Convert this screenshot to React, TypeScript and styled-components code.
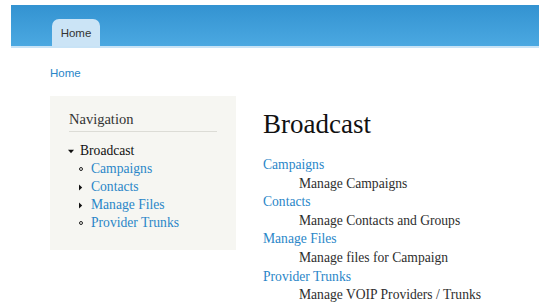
import React from 'react';
import styled, { createGlobalStyle } from 'styled-components';

const Global = createGlobalStyle`
  html, body { margin: 0; padding: 0; background: #fff; }
  body { font-family: "Liberation Serif", Georgia, serif; color: #3b3b3b; }
`;

const Page = styled.div`
  padding: 5px 16px 0 11px;
`;

const Header = styled.header`
  height: 41px;
  background: linear-gradient(to bottom, #3393d1, #4ba8e1);
  border-bottom: 2px solid #c8e3f6;
  display: flex;
  align-items: flex-end;
  padding-left: 41px;
`;

const Tab = styled.a`
  width: 48px;
  height: 20px;
  padding-top: 7px;
  background: #cbe4f6;
  border-radius: 7px 7px 0 0;
  text-align: center;
  font-family: "Liberation Sans", Arial, sans-serif;
  font-size: 11.5px;
  line-height: 14px;
  color: #333;
`;

const Breadcrumb = styled.a`
  display: block;
  margin: 17.5px 0 0 39px;
  font-family: "Liberation Sans", Arial, sans-serif;
  font-size: 11.5px;
  line-height: 14px;
  color: #2a86c8;
`;

const Main = styled.div`
  display: flex;
  align-items: flex-start;
  margin: 16.5px 0 0 39px;
  gap: 27px;
`;

const Sidebar = styled.aside`
  width: 186px;
  height: 154px;
  box-sizing: border-box;
  background: #f6f6f2;
  padding: 15px 19px 0 19px;
`;

const BlockTitle = styled.h2`
  margin: 0;
  font-size: 14.5px;
  line-height: 17px;
  font-weight: normal;
  color: #333;
  padding-bottom: 3px;
  border-bottom: 1px solid #dcdcd6;
`;

const Tree = styled.ul`
  list-style: none;
  margin: 10px 0 0 -1px;
  padding: 0;
`;

const Item = styled.li<{ $indent: number }>`
  display: flex;
  align-items: center;
  height: 18.1px;
  font-size: 13.6px;
  line-height: 18.1px;
  padding-left: ${p => p.$indent}px;
`;

const Marker = styled.span<{ $w: number }>`
  width: ${p => p.$w}px;
  display: inline-flex;
  align-items: center;
  flex-shrink: 0;
`;

const Dot = styled.span`
  width: 2px;
  height: 2px;
  border: 1px solid #222;
  border-radius: 50%;
  margin-left: 1px;
`;

const NavLink = styled.a`
  color: #2a86c8;
`;

const Current = styled.span`
  color: #111;
`;

const Content = styled.section`
  padding-top: 12px;
`;

const Title = styled.h1`
  margin: 0 0 16px 0;
  font-size: 27px;
  font-weight: normal;
  color: #111;
  line-height: 32px;
`;

const Dl = styled.dl`
  margin: 0;
  font-size: 13.6px;
  line-height: 18.6px;
`;

const Dt = styled.dt`
  height: 18.6px;
`;

const Dd = styled.dd`
  margin: 0 0 0 36px;
  height: 18.6px;
  color: #2e2e2e;
`;

const Arrow: React.FC<{ dir: 'down' | 'right' }> = ({ dir }) => (
  <svg width="7" height="7" viewBox="0 0 7 7">
    {dir === 'down'
      ? <path d="M0 1.8 H6 L3 5.2 Z" fill="#111" />
      : <path d="M1 0.5 V6.5 L4.2 3.5 Z" fill="#111" />}
  </svg>
);

const items = [
  { label: 'Campaigns', kind: 'dot', desc: 'Manage Campaigns' },
  { label: 'Contacts', kind: 'arrow', desc: 'Manage Contacts and Groups' },
  { label: 'Manage Files', kind: 'arrow', desc: 'Manage files for Campaign' },
  { label: 'Provider Trunks', kind: 'dot', desc: 'Manage VOIP Providers / Trunks' },
];

export default function App() {
  return (
    <Page>
      <Global />
      <Header>
        <Tab>Home</Tab>
      </Header>
      <Breadcrumb>Home</Breadcrumb>
      <Main>
        <Sidebar>
          <BlockTitle>Navigation</BlockTitle>
          <Tree>
            <Item $indent={0}>
              <Marker $w={12}><Arrow dir="down" /></Marker>
              <Current>Broadcast</Current>
            </Item>
            {items.map(it => (
              <Item key={it.label} $indent={10}>
                <Marker $w={13}>{it.kind === 'dot' ? <Dot /> : <Arrow dir="right" />}</Marker>
                <NavLink>{it.label}</NavLink>
              </Item>
            ))}
          </Tree>
        </Sidebar>
        <Content>
          <Title>Broadcast</Title>
          <Dl>
            {items.map(it => (
              <React.Fragment key={it.label}>
                <Dt><NavLink>{it.label}</NavLink></Dt>
                <Dd>{it.desc}</Dd>
              </React.Fragment>
            ))}
          </Dl>
        </Content>
      </Main>
    </Page>
  );
}
